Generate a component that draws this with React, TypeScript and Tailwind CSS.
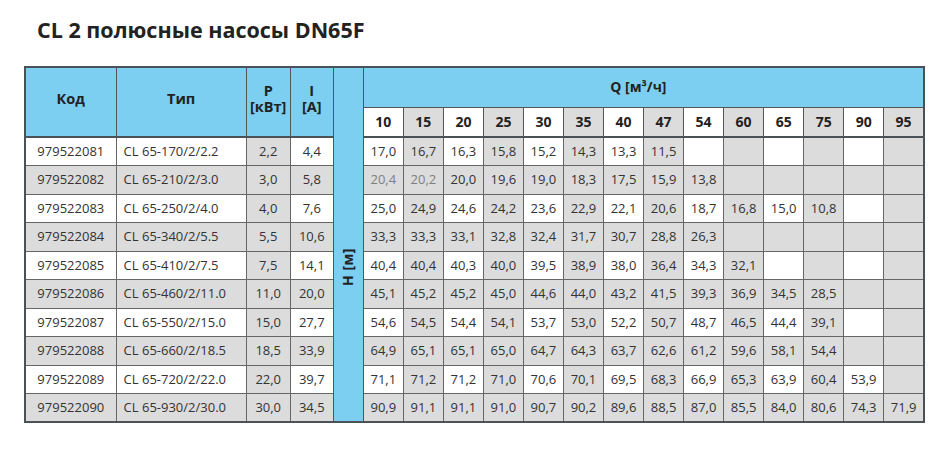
import React from "react";

const qHeads = ["10", "15", "20", "25", "30", "35", "40", "47", "54", "60", "65", "75", "90", "95"];

type Row = { code: string; type: string; p: string; i: string; q: string[] };

const rows: Row[] = [
  { code: "979522081", type: "CL 65-170/2/2.2", p: "2,2", i: "4,4", q: ["17,0", "16,7", "16,3", "15,8", "15,2", "14,3", "13,3", "11,5"] },
  { code: "979522082", type: "CL 65-210/2/3.0", p: "3,0", i: "5,8", q: ["20,4", "20,2", "20,0", "19,6", "19,0", "18,3", "17,5", "15,9", "13,8"] },
  { code: "979522083", type: "CL 65-250/2/4.0", p: "4,0", i: "7,6", q: ["25,0", "24,9", "24,6", "24,2", "23,6", "22,9", "22,1", "20,6", "18,7", "16,8", "15,0", "10,8"] },
  { code: "979522084", type: "CL 65-340/2/5.5", p: "5,5", i: "10,6", q: ["33,3", "33,3", "33,1", "32,8", "32,4", "31,7", "30,7", "28,8", "26,3"] },
  { code: "979522085", type: "CL 65-410/2/7.5", p: "7,5", i: "14,1", q: ["40,4", "40,4", "40,3", "40,0", "39,5", "38,9", "38,0", "36,4", "34,3", "32,1"] },
  { code: "979522086", type: "CL 65-460/2/11.0", p: "11,0", i: "20,0", q: ["45,1", "45,2", "45,2", "45,0", "44,6", "44,0", "43,2", "41,5", "39,3", "36,9", "34,5", "28,5"] },
  { code: "979522087", type: "CL 65-550/2/15.0", p: "15,0", i: "27,7", q: ["54,6", "54,5", "54,4", "54,1", "53,7", "53,0", "52,2", "50,7", "48,7", "46,5", "44,4", "39,1"] },
  { code: "979522088", type: "CL 65-660/2/18.5", p: "18,5", i: "33,9", q: ["64,9", "65,1", "65,1", "65,0", "64,7", "64,3", "63,7", "62,6", "61,2", "59,6", "58,1", "54,4"] },
  { code: "979522089", type: "CL 65-720/2/22.0", p: "22,0", i: "39,7", q: ["71,1", "71,2", "71,2", "71,0", "70,6", "70,1", "69,5", "68,3", "66,9", "65,3", "63,9", "60,4", "53,9"] },
  { code: "979522090", type: "CL 65-930/2/30.0", p: "30,0", i: "34,5", q: ["90,9", "91,1", "91,1", "91,0", "90,7", "90,2", "89,6", "88,5", "87,0", "85,5", "84,0", "80,6", "74,3", "71,9"] },
];

const headCell = "bg-[#7dcff2] border border-[#555] border-b-2 border-b-[#4a5258] font-bold text-[#222] p-0";

export default function App() {
  return (
    <div className="w-[949px] h-[449px] bg-white font-['Open_Sans',sans-serif] text-[#333] overflow-hidden">
      <h1 className="pl-[37px] pt-[16px] text-[21.5px] leading-[28px] font-bold text-[#222]">
        CL 2 полюсные насосы DN65F
      </h1>
      <table className="ml-[24px] mt-[22px] w-[901px] table-fixed border-collapse border-2 border-[#4a5258] text-[13px]">
        <colgroup>
          <col className="w-[91px]" />
          <col className="w-[130px]" />
          <col className="w-[44px]" />
          <col className="w-[43px]" />
          <col className="w-[30px]" />
          {qHeads.map((h) => (
            <col key={h} className="w-[40px]" />
          ))}
        </colgroup>
        <tbody>
          <tr className="h-[40px]">
            <th rowSpan={2} className={`${headCell} text-[14.5px] leading-[18px] pb-[6px]`}>
              Код
            </th>
            <th rowSpan={2} className={`${headCell} text-[14.5px] leading-[18px] pb-[6px]`}>
              Тип
            </th>
            <th rowSpan={2} className={`${headCell} text-[14.5px] leading-[16px] pb-[6px] whitespace-nowrap`}>
              P<br />[кВт]
            </th>
            <th rowSpan={2} className={`${headCell} text-[14.5px] leading-[16px] pb-[6px]`}>
              I<br />[A]
            </th>
            <th rowSpan={12} className="bg-[#7dcff2] border border-[#555] align-top p-0">
              <div className="flex justify-center pt-[180px]">
                <span className="[writing-mode:vertical-rl] rotate-180 text-[14px] leading-[18px] font-bold text-[#222] tracking-[0.5px]">
                  H [м]
                </span>
              </div>
            </th>
            <th colSpan={14} className="bg-[#7dcff2] border border-[#555] text-[14px] leading-[18px] font-bold text-[#222] pr-[10px]">
              Q [м³/ч]
            </th>
          </tr>
          <tr className="h-[30px]">
            {qHeads.map((h, k) => (
              <th
                key={h}
                className={`${k % 2 === 1 ? "bg-[#dcdcdc]" : "bg-white"} border border-[#555] border-b-2 border-b-[#4a5258] text-[14px] leading-[18px] font-bold text-[#222] p-0`}
              >
                {h}
              </th>
            ))}
          </tr>
          {rows.map((r, ri) => {
            const grayRow = ri % 2 === 1;
            return (
              <tr key={r.code} className="h-[28.5px]">
                <td className={`${grayRow ? "bg-[#dcdcdc]" : "bg-white"} border border-[#666] text-center p-0`}>{r.code}</td>
                <td className={`${grayRow ? "bg-[#dcdcdc]" : "bg-white"} border border-[#666] pl-[7px] py-0 whitespace-nowrap`}>{r.type}</td>
                <td className="bg-[#dcdcdc] border border-[#666] text-center p-0">{r.p}</td>
                <td className={`${grayRow ? "bg-[#dcdcdc]" : "bg-white"} border border-[#666] text-center p-0`}>{r.i}</td>
                {qHeads.map((h, k) => {
                  const gray = grayRow || k % 2 === 1;
                  const faded = ri === 1 && k < 2;
                  return (
                    <td
                      key={h}
                      className={`${gray ? "bg-[#dcdcdc]" : "bg-white"} ${faded ? "text-[#808080]" : ""} border border-[#666] text-center p-0`}
                    >
                      {r.q[k] ?? ""}
                    </td>
                  );
                })}
              </tr>
            );
          })}
        </tbody>
      </table>
    </div>
  );
}
